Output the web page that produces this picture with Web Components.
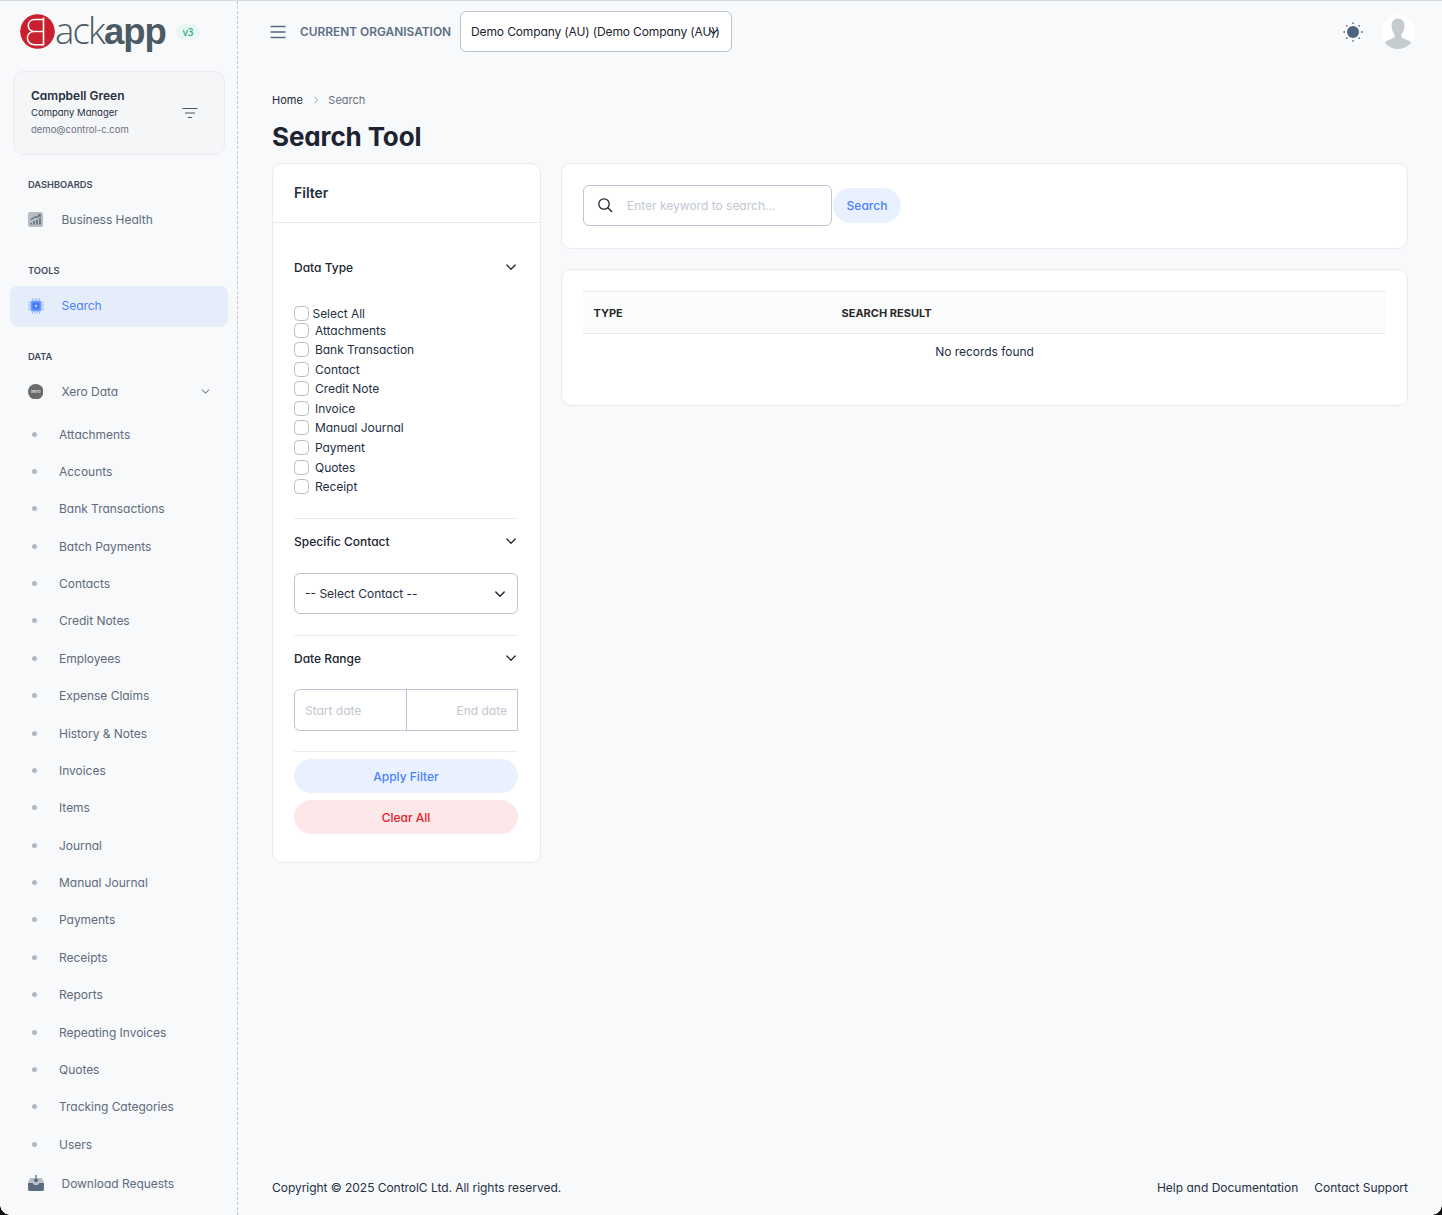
<!DOCTYPE html>
<html><head><meta charset="utf-8">
<style>
html,body{margin:0;padding:0;height:100%}
body{background:#f8f9fb;font-family:Inter,"Noto Sans",sans-serif;font-feature-settings:"cv11";color:#181c32;overflow:hidden}
</style></head>
<body>
<app-shell>
  <app-sidebar slot="side"></app-sidebar>
  <app-header slot="head"></app-header>
  <page-title slot="main"></page-title>
  <search-view slot="main"></search-view>
  <app-footer slot="foot"></app-footer>
</app-shell>
<script>
const chev=(c='#1f2937',s=14,w=1.6)=>`<svg width="${s}" height="${s}" viewBox="0 0 14 14" fill="none"><path d="M2.8 5l4.2 4.2L11.2 5" stroke="${c}" stroke-width="${w}" stroke-linecap="round" stroke-linejoin="round"/></svg>`;
function def(name,css,html,init){
  customElements.define(name,class extends HTMLElement{
    constructor(){super();const r=this.attachShadow({mode:'open'});r.innerHTML=`<style>${css}</style>${typeof html==='function'?html(this):html}`;}
    connectedCallback(){if(init)init(this)}
  });
}
def('app-shell',`
:host{display:block;width:1442px;height:1215px;box-sizing:border-box;border-top:1px solid #d5d8dc;position:relative;overflow:hidden}
.wrap{display:flex;height:1214px}
.side{flex:0 0 238px;width:238px}
.col{flex:1;display:flex;flex-direction:column;min-width:0}
.main{flex:1;padding:0 34px;display:flex;flex-direction:column}
.corner{position:absolute;left:0;bottom:0;width:10px;height:10px;background:radial-gradient(circle at 100% 0,transparent 9.5px,#111 10px)}
.corner.r{left:auto;right:0;transform:scaleX(-1)}
`,`<div class="wrap"><div class="side"><slot name="side"></slot></div><div class="col"><slot name="head"></slot><div class="main"><slot name="main"></slot></div><slot name="foot"></slot></div></div><div class="corner"></div><div class="corner r"></div>`);

def('app-logo',`
:host{display:flex;align-items:center;height:61px;padding-left:20px}
svg{display:block;flex:none}
.t{font-family:"Open Sans",sans-serif;font-size:36.5px;line-height:40px;letter-spacing:-1.8px;color:#4b5a63;white-space:nowrap;position:relative;top:-1px;font-feature-settings:normal;width:110px;flex:none}
.a{font-weight:300}.b{font-family:"Liberation Sans",sans-serif;font-size:36.5px;font-weight:700;letter-spacing:-1px}
.v{margin-left:11px;font-size:10px;font-weight:600;color:#35b58b;background:#e9f6f1;border-radius:9px;width:24px;height:16px;display:flex;align-items:center;justify-content:center;font-family:"Noto Sans",sans-serif}
`,`<svg width="35" height="35" viewBox="0 0 35 35"><circle cx="17.5" cy="17.5" r="17.3" fill="#c8202f"/>
<path d="M23.5 3.5V31.5" stroke="#fff" stroke-width="1.6"/>
<path d="M23.5 5.5H15C10.6 5.5 8.3 8.4 8.3 11.6c0 3.3 2.3 5.4 5.2 5.9-3.6.3-6.1 3-6.1 6.5 0 3.9 2.9 6.8 7.3 6.8h8.8" fill="none" stroke="#fff" stroke-width="1.5"/>
<path d="M23.5 17.5H13.5" stroke="#fff" stroke-width="1.4"/></svg>
<span class="t"><span class="a">ack</span><span class="b">app</span></span><span class="v">v3</span>`);

def('user-card',`
:host{display:flex;align-items:center;justify-content:space-between;box-sizing:border-box;margin:9px 12px 0 13px;height:84px;border:1px solid #e9ebef;border-radius:11px;background:#f5f6f8;padding:0 26px 0 17px}
.n{font-size:12px;font-weight:600;color:#252f3f;line-height:16px;margin-bottom:-.5px;position:relative;top:-.6px}
.r{font-size:9.5px;color:#252f3f;line-height:17px}
.e{font-size:9.5px;color:#6b7280;line-height:17px}
svg{display:block}
`,`<div><div class="n">Campbell Green</div><div class="r">Company Manager</div><div class="e">demo@control-c.com</div></div>
<svg width="16" height="12" viewBox="0 0 16 12"><path d="M.5 1.5h15M3 6h10M6 10.5h4" stroke="#4b5563" stroke-width="1.2" fill="none"/></svg>`);

def('nav-label',`:host{display:block;font-size:9.3px;font-weight:600;line-height:15px;height:15px;color:#3f4a5a;padding-left:28px}`,`<slot></slot>`);

def('nav-item',`
:host{display:flex;align-items:center;height:41px;margin:0 9px 0 10px;padding-left:18px;border-radius:8px;font-size:12px;color:#5e6b7c;box-sizing:border-box;letter-spacing:-.03px}
:host([active]){background:#e6edfa;color:#4a80ff;padding-bottom:2px}
.i{flex:0 0 15px;min-width:0;width:15px;height:16px;display:flex;align-items:center;justify-content:center;margin-right:18.5px}
.grow{flex:1}
.c{margin-right:17px;display:flex}
`,e=>`<span class="i"><slot name="icon"></slot></span><slot></slot><span class="grow"></span>${e.hasAttribute('chev')?`<span class="c">${chev('#7c8794',11,1.3)}</span>`:''}`);

def('nav-sub',`
:host{display:flex;align-items:center;height:37.375px;padding-left:32px;font-size:12px;color:#5e6b7c;letter-spacing:-.03px}
i{width:5px;height:5px;border-radius:50%;background:#b0b8c4;margin-right:22px}
`,`<i></i><slot></slot>`);

def('app-sidebar',`
:host{display:block;box-sizing:border-box;width:238px;height:1214px;border-right:1px dashed #c4c9d1;overflow:hidden}
nav-label{margin-top:22px;margin-bottom:7px}
nav-label.tools{margin-top:23px;margin-bottom:8px}
.subs{margin-top:3.42px;margin-bottom:.08px}
svg text{font-family:Inter,sans-serif}
`,`<app-logo></app-logo><user-card></user-card>
<nav-label>DASHBOARDS</nav-label>
<nav-item><svg slot="icon" width="15" height="15" viewBox="0 0 15 15"><rect width="15" height="15" rx="2.5" fill="#b6bcc4"/><path d="M3 11v1.5M6 9v3.5M9 8v4.5M12 6v6.5" stroke="#566373" stroke-width="1.4"/><path d="M3 7.5L7.5 4.6 9 5.6 12 3M10 2.8h2.2V5" stroke="#566373" stroke-width="1.1" fill="none"/></svg>Business Health</nav-item>
<nav-label class="tools">TOOLS</nav-label>
<nav-item active><svg slot="icon" width="16" height="16" viewBox="0 0 16 16" style="flex:none"><rect x="2.5" y="2.5" width="11" height="11" rx="2" fill="#6f9bff"/><rect x="4.5" y="4.5" width="7" height="7" rx="1.4" fill="#3f78f5"/><path d="M8.6 5.4L6.6 8.4H8L7.4 10.6 9.4 7.6H8z" fill="#fff"/><path d="M4.5.3v1.5M7 .3v1.5M9 .3v1.5M11.5.3v1.5M4.5 14.2v1.5M7 14.2v1.5M9 14.2v1.5M11.5 14.2v1.5M.3 4.5h1.5M.3 7h1.5M.3 9h1.5M.3 11.5h1.5M14.2 4.5h1.5M14.2 7h1.5M14.2 9h1.5M14.2 11.5h1.5" stroke="#7ba3ff" stroke-width=".9"/></svg>Search</nav-item>
<nav-label>DATA</nav-label>
<nav-item chev><svg slot="icon" width="15.5" height="15.5" viewBox="0 0 16 16" style="flex:none"><circle cx="8" cy="8" r="8" fill="#6a6a6c"/><text x="8" y="9.6" text-anchor="middle" font-size="5" fill="#f0f0f0">xero</text></svg>Xero Data</nav-item>
<div class="subs">
${['Attachments','Accounts','Bank Transactions','Batch Payments','Contacts','Credit Notes','Employees','Expense Claims','History &amp; Notes','Invoices','Items','Journal','Manual Journal','Payments','Receipts','Reports','Repeating Invoices','Quotes','Tracking Categories','Users'].map(s=>`<nav-sub>${s}</nav-sub>`).join('')}
</div>
<nav-item><svg slot="icon" width="16" height="16" viewBox="0 0 16 16" style="flex:none"><path d="M3 3h10c.8 0 1.3.4 1.6 1L16 8v6a2 2 0 0 1-2 2H2a2 2 0 0 1-2-2V8l1.4-4c.3-.6.8-1 1.6-1z" fill="#b9c0c9"/><path d="M0 8h4.5l1.5 2h4l1.5-2H16v6a2 2 0 0 1-2 2H2a2 2 0 0 1-2-2z" fill="#5a6b7d"/><path d="M8 0v6.5M5.8 4.4L8 6.6l2.2-2.2" stroke="#4b5b6c" stroke-width="1.2" fill="none"/></svg>Download Requests</nav-item>`);

def('app-header',`
:host{display:flex;align-items:center;height:61px;padding:0 27px 0 32px;box-sizing:border-box}
.m{display:block;margin-right:14px}
.l{font-size:11.9px;font-weight:600;color:#5c6f84;margin-right:9px;white-space:nowrap}
.s{position:relative;box-sizing:border-box;width:272px;height:41px;background:#fff;border:1px solid #bcc5d1;border-radius:6px;display:flex;align-items:center;padding-left:10px;font-size:12px;letter-spacing:-.13px;color:#1b2430;white-space:nowrap;overflow:hidden}
.s span{position:absolute;right:11px;top:13px;display:flex}
.g{flex:1}
.sun{display:block;margin-right:18px}
.av{display:block}
`,`<svg class="m" width="16" height="14" viewBox="0 0 16 14"><path d="M.5 1.5h15M.5 7h15M.5 12.5h15" stroke="#566a80" stroke-width="1.5"/></svg>
<span class="l">CURRENT ORGANISATION</span>
<div class="s">Demo Company (AU) (Demo Company (AU))<span>${chev('#1f2937',13,1.4)}</span></div>
<span class="g"></span>
<svg class="sun" width="20" height="20" viewBox="0 0 20 20"><circle cx="10" cy="10" r="6" fill="#4d647e"/><g fill="#5f7187"><circle cx="10" cy="1.2" r=".9"/><circle cx="10" cy="18.8" r=".9"/><circle cx="1.2" cy="10" r=".9"/><circle cx="18.8" cy="10" r=".9"/><circle cx="3.8" cy="3.8" r=".9"/><circle cx="16.2" cy="3.8" r=".9"/><circle cx="3.8" cy="16.2" r=".9"/><circle cx="16.2" cy="16.2" r=".9"/></g></svg>
<svg class="av" width="34" height="34" viewBox="0 0 34 34"><defs><clipPath id="c"><circle cx="17" cy="17" r="17"/></clipPath></defs><circle cx="17" cy="17" r="17" fill="#fff"/><g clip-path="url(#c)" fill="#c5cccf"><path d="M17 3.5c4.3 0 6.4 3 6.4 7.2 0 4-1.6 7-2.9 8.6v3.2l8 3.4c1.5.7 2.3 2 2.5 3.6v5H3v-5c.2-1.6 1-2.9 2.5-3.6l8-3.4v-3.2c-1.3-1.6-2.9-4.6-2.9-8.6 0-4.2 2.1-7.2 6.4-7.2z"/></g></svg>`);

def('page-title',`
:host{display:block;padding-top:30px}
.b{display:flex;align-items:center;font-size:11px;line-height:16px;color:#6b7280}
.b b{font-weight:400;color:#1f2937}
.b svg{margin:0 9.5px 0 10px}
h1{margin:13px 0 10px;font-size:26px;line-height:32px;font-weight:700;color:#1b2430;letter-spacing:-.12px}
`,`<div class="b"><b>Home</b><svg width="6" height="8" viewBox="0 0 6 8"><path d="M1.3 .8L4.6 4 1.3 7.2" stroke="#9aa3ae" stroke-width="1" fill="none"/></svg>Search</div><h1>Search Tool</h1>`);

def('ui-card',`:host{display:block;box-sizing:border-box;background:#fff;border:1px solid #e9ebf0;border-radius:10px}`,`<slot></slot>`);

def('check-row',`
:host{display:flex;align-items:center;font-size:12px;color:#252f3f;height:19.55px;letter-spacing:-.04px}
i{box-sizing:border-box;width:15px;height:15px;border:1px solid #b5bec9;border-radius:4.5px;background:#fff;margin-right:6px;flex:none}
:host([tight]) i{margin-right:3.5px}
`,`<i></i><slot></slot>`);

def('filter-head',`
:host{display:flex;align-items:center;justify-content:space-between;font-size:12px;font-weight:500;color:#1b2430;height:15px}
span{display:flex;margin-bottom:var(--cm,2px)}
`,`<slot></slot><span>${chev('#1f2937',14,1.3)}</span>`);

def('pill-btn',`
:host{display:flex;align-items:center;justify-content:center;height:34px;border-radius:17px;font-size:12px;font-weight:500;background:#eaf1fe;color:#4a80ff}
:host([danger]){background:#fce8e8;color:#e3202c}
`,`<slot></slot>`);

def('filter-panel',`
:host{display:block;flex:0 0 269px;width:269px}
ui-card{display:block;height:700px}
.t{height:57px;padding-bottom:1px;display:flex;align-items:center;padding-left:21px;padding-right:21px;font-size:14px;font-weight:600;color:#252f3f;border-bottom:1px solid #e9ebf0}
.b{padding:0 22px 0 21px}
filter-head.d{margin-top:36.5px;--cm:0px}
.list{margin-top:31.4px}
hr{border:0;border-top:1px solid #e9ebf0;margin:0}
.sel{box-sizing:border-box;height:41px;border:1px solid #bcc5d1;border-radius:6px;display:flex;align-items:center;justify-content:space-between;padding:0 10px;font-size:12px;color:#252f3f}
.sel span{display:flex}
.dates{display:flex;box-sizing:border-box;height:42px;border:1px solid #bcc5d1;border-radius:6px 0 0 6px;font-size:12px;color:#c0c7d1}
.dates div{flex:1;display:flex;align-items:center;padding:0 10px}
.dates div+div{justify-content:flex-end;border-left:1px solid #bcc5d1}
`,`<ui-card><div class="t">Filter</div><div class="b">
<filter-head class="d">Data Type</filter-head>
<div class="list">
<check-row tight style="height:14.525px">Select All</check-row>
${['Attachments','Bank Transaction','Contact','Credit Note','Invoice','Manual Journal','Payment','Quotes','Receipt'].map(s=>`<check-row>${s}</check-row>`).join('')}
</div>
<hr style="margin-top:21.75px">
<filter-head style="margin-top:15px">Specific Contact</filter-head>
<div class="sel" style="margin-top:24px">-- Select Contact --<span>${chev('#1f2937',14,1.5)}</span></div>
<hr style="margin-top:21px">
<filter-head style="margin-top:15px">Date Range</filter-head>
<div class="dates" style="margin-top:23px"><div>Start date</div><div>End date</div></div>
<hr style="margin-top:20px">
<pill-btn style="margin-top:7px">Apply Filter</pill-btn>
<pill-btn danger style="margin-top:7px">Clear All</pill-btn>
</div></ui-card>`);

def('search-box',`
:host{display:flex;align-items:center;height:82px;padding:0 21px}
.i{box-sizing:border-box;width:249px;height:41px;border:1px solid #bcc5d1;border-radius:6px;display:flex;align-items:center;padding-left:12.5px;font-size:12px;color:#c0c7d1}
.i svg{margin-right:14.5px}
.g{box-sizing:border-box;margin-left:1px;width:68px;height:35px;border-radius:18px;background:#eaf1fe;color:#4a80ff;font-size:12px;font-weight:500;display:flex;align-items:center;justify-content:center}
`,`<div class="i"><svg width="16" height="16" viewBox="0 0 16 16" fill="none"><circle cx="7" cy="7" r="5.2" stroke="#1f2937" stroke-width="1.3"/><path d="M10.8 10.8L14.6 14.6" stroke="#1f2937" stroke-width="1.4" stroke-linecap="round"/></svg>Enter keyword to search...</div><div class="g">Search</div>`);

def('result-table',`
:host{display:block;padding:21px 21px 0}
.h{box-sizing:border-box;display:grid;grid-template-columns:248px 1fr;height:43px;align-items:center;background:#fbfcfc;border-top:1px solid #e9ebf0;border-bottom:1px solid #e9ebf0;font-size:11px;font-weight:700;color:#2a2a2a;padding-left:10.5px}
.e{height:35px;display:flex;align-items:center;justify-content:center;font-size:12px;color:#252f3f;letter-spacing:-.03px}
`,`<div class="h"><span>TYPE</span><span>SEARCH RESULT</span></div><div class="e">No records found</div>`);

def('search-view',`
:host{display:flex;gap:20px;align-items:flex-start}
.r{flex:1;display:flex;flex-direction:column;gap:20px;min-width:0}
`,`<filter-panel></filter-panel><div class="r"><ui-card style="height:86px"><search-box></search-box></ui-card><ui-card style="height:137px"><result-table></result-table></ui-card></div>`);

def('app-footer',`
:host{display:flex;justify-content:space-between;align-items:center;padding:0 34px;height:16px;margin-bottom:20px;font-size:12px;color:#252f3f}
.c{letter-spacing:-.04px}
.l{display:flex;gap:16px}
`,`<span class="c">Copyright © 2025 ControlC Ltd. All rights reserved.</span><span class="l"><span>Help and Documentation</span><span>Contact Support</span></span>`);
</script>
</body></html>
